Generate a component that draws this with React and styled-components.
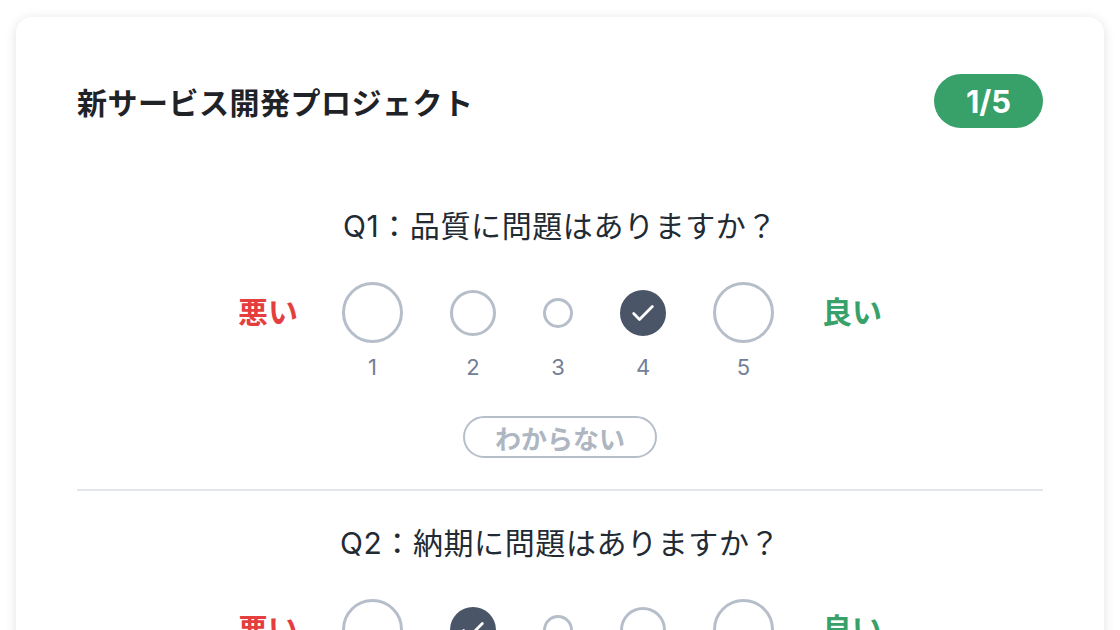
import React from "react";
import styled, { createGlobalStyle } from "styled-components";

const Global = createGlobalStyle`
  html, body { margin: 0; padding: 0; background: #ffffff; }
  body { font-family: Inter, "Noto Sans CJK JP", "Noto Sans", sans-serif; }
  * { box-sizing: border-box; }
`;

const Page = styled.div`
  padding: 17px 16px;
`;

const Card = styled.div`
  background: #fff;
  border-radius: 16px;
  box-shadow: 0 2px 12px rgba(0, 0, 0, 0.12);
  padding: 57px 61px 40px;
`;

const Header = styled.div`
  display: flex;
  align-items: center;
  justify-content: space-between;
  margin-bottom: 46px;
`;

const Title = styled.h1`
  margin: 0;
  font-size: 30px;
  font-weight: 700;
  letter-spacing: 0.5px;
  color: #1f2328;
  font-family: "Noto Sans CJK JP", sans-serif;
  line-height: 1.5;
`;

const Badge = styled.div`
  width: 109px;
  height: 54px;
  border-radius: 27px;
  background: #38a169;
  color: #fff;
  font-family: Inter, "Noto Sans", sans-serif;
  font-weight: 700;
  font-size: 31px;
  display: flex;
  align-items: center;
  justify-content: center;
`;

const Question = styled.section`
  padding: 30px 0 31px;
  display: flex;
  flex-direction: column;
  align-items: center;
  border-bottom: ${(p) => (p.$last ? "none" : "2px solid #e2e6ec")};
`;

const QText = styled.div`
  font-size: 30px;
  line-height: 45px;
  letter-spacing: 0.6px;
  color: #222a33;
  font-family: Inter, "Noto Sans CJK JP", sans-serif;
  margin-bottom: 33px;
`;

const Scale = styled.div`
  display: flex;
  align-items: flex-start;
  gap: 47px;
  margin-bottom: 34px;
`;

const EndLabel = styled.div`
  height: 61px;
  padding-bottom: 5px;
  display: flex;
  align-items: center;
  font-family: "Noto Sans CJK JP", sans-serif;
  font-weight: 700;
  font-size: 30px;
  color: ${(p) => p.$color};
  margin: ${(p) => (p.$side === "left" ? "0 -3px 0 0" : "0 0 0 1px")};
`;

const Option = styled.div`
  display: flex;
  flex-direction: column;
  align-items: center;
  width: ${(p) => p.$size}px;
`;

const CircleSlot = styled.div`
  height: 61px;
  display: flex;
  align-items: center;
  justify-content: center;
`;

const Circle = styled.div`
  width: ${(p) => p.$size}px;
  height: ${(p) => p.$size}px;
  border-radius: 50%;
  border: 3px solid ${(p) => (p.$selected ? "#4a5568" : "#b6beca")};
  background: ${(p) => (p.$selected ? "#4a5568" : "#fff")};
  display: flex;
  align-items: center;
  justify-content: center;
`;

const Num = styled.div`
  margin-top: 9px;
  font-size: 22px;
  line-height: 30px;
  color: #718096;
  font-family: Inter, sans-serif;
`;

const Unknown = styled.button`
  height: 42px;
  width: 194px;
  padding: 0;
  border-radius: 21px;
  border: 2px solid #b6beca;
  background: #fff;
  color: #aeb6c2;
  font-family: "Noto Sans CJK JP", sans-serif;
  font-weight: 700;
  font-size: 26px;
  display: flex;
  align-items: center;
  justify-content: center;
  cursor: pointer;
`;

const sizes = [61, 46, 30, 46, 61];

const Check = () => (
  <svg width="28" height="28" viewBox="0 0 24 24" fill="none" stroke="#fff" strokeWidth="2.4" strokeLinecap="round" strokeLinejoin="round">
    <path d="M4 12.5l5 5L20 6.5" />
  </svg>
);

const QuestionBlock = ({ text, selected, last }) => (
  <Question $last={last}>
    <QText>{text}</QText>
    <Scale>
      <EndLabel $color="#e53e3e" $side="left">悪い</EndLabel>
      {sizes.map((s, i) => (
        <Option key={i} $size={s}>
          <CircleSlot>
            <Circle $size={s} $selected={selected === i + 1}>
              {selected === i + 1 && <Check />}
            </Circle>
          </CircleSlot>
          <Num>{i + 1}</Num>
        </Option>
      ))}
      <EndLabel $color="#38a169" $side="right">良い</EndLabel>
    </Scale>
    <Unknown>わからない</Unknown>
  </Question>
);

export default function App() {
  return (
    <>
      <Global />
      <Page>
        <Card>
          <Header>
            <Title>新サービス開発プロジェクト</Title>
            <Badge>1/5</Badge>
          </Header>
          <QuestionBlock text="Q1：品質に問題はありますか？" selected={4} />
          <QuestionBlock text="Q2：納期に問題はありますか？" selected={2} />
          <QuestionBlock text="Q3：予算に問題はありますか？" selected={0} last />
        </Card>
      </Page>
    </>
  );
}
